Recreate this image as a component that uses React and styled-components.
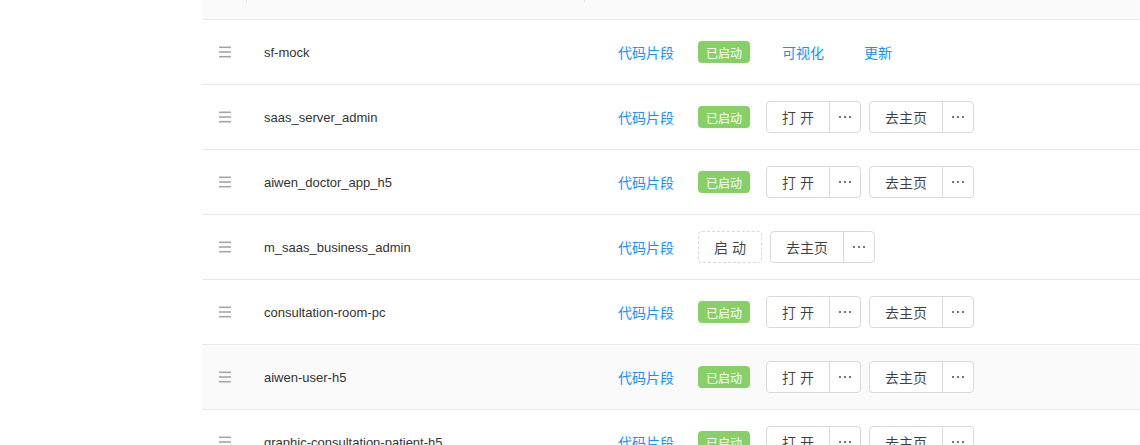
import React from 'react';
import styled, { createGlobalStyle, css } from 'styled-components';

const GlobalStyle = createGlobalStyle`
  html, body {
    margin: 0;
    padding: 0;
    background: #fff;
    overflow: hidden;
  }
  body {
    font-family: "Liberation Sans", "Noto Sans CJK SC", sans-serif;
    color: rgba(0, 0, 0, 0.65);
  }
`;

const Page = styled.div`
  display: flex;
  padding-left: 202px;
`;

const Table = styled.div`
  flex: 1;
  display: flex;
  flex-direction: column;
`;

const Head = styled.div`
  display: grid;
  grid-template-columns: 45px 338px 1fr;
  height: 19px;
  background: #fafafa;
  border-bottom: 1px solid #e8e8e8;
`;

const HeadCell = styled.div`
  position: relative;

  ${(props) =>
    props.divided &&
    css`
      &::after {
        content: '';
        position: absolute;
        right: 0;
        top: 0;
        width: 1px;
        height: 3px;
        background: #e8e8e8;
      }
    `}
`;

const Row = styled.div`
  display: grid;
  grid-template-columns: 45px 338px 1fr;
  height: 64px;
  align-items: center;
  border-bottom: 1px solid #e8e8e8;
  background: ${(props) => (props.hover ? '#fafafa' : '#fff')};
`;

const HandleCell = styled.div`
  display: flex;
  align-items: center;
  padding-left: 17px;
  color: #999;
`;

const NameCell = styled.div`
  padding-left: 17px;
  font-size: 13px;
  color: #333;
`;

const ActionCell = styled.div`
  display: flex;
  align-items: center;
  padding-left: 33px;
`;

const LinkText = styled.span`
  color: #1890ff;
  font-size: 14px;
  margin-left: ${(props) => props.gap || 0}px;
  cursor: pointer;
`;

const Tag = styled.span`
  display: inline-flex;
  align-items: center;
  justify-content: center;
  box-sizing: border-box;
  width: 52px;
  height: 22px;
  margin-left: 24px;
  border-radius: 4px;
  background: #87d068;
  color: #fff;
  font-size: 12px;
`;

const Group = styled.div`
  display: inline-flex;
  margin-left: ${(props) => props.gap}px;
`;

const Button = styled.button`
  box-sizing: border-box;
  width: ${(props) => props.w}px;
  height: 32px;
  padding: 0;
  border: 1px solid #d9d9d9;
  background: #fff;
  color: rgba(0, 0, 0, 0.75);
  font-family: inherit;
  font-size: 14px;
  display: inline-flex;
  align-items: center;
  justify-content: center;
  border-radius: 4px 0 0 4px;

  ${(props) =>
    props.more &&
    css`
      margin-left: -1px;
      border-radius: 0 4px 4px 0;
    `}
`;

const DashedButton = styled(Button)`
  border-style: dashed;
  border-radius: 4px;
  margin-left: 24px;
`;

const DragIcon = () => (
  <svg width="12" height="12" viewBox="0 0 12 12">
    <g fill="#a6a6a6">
      <rect x="0" y="0.5" width="12" height="1.6" />
      <rect x="0" y="5.2" width="12" height="1.6" />
      <rect x="0" y="9.9" width="12" height="1.6" />
    </g>
  </svg>
);

const Dots = () => (
  <svg width="14" height="4" viewBox="0 0 14 4">
    <g fill="#555">
      <circle cx="2" cy="2" r="1.1" />
      <circle cx="7" cy="2" r="1.1" />
      <circle cx="12" cy="2" r="1.1" />
    </g>
  </svg>
);

const SplitButton = ({ label, w, gap }) => (
  <Group gap={gap}>
    <Button w={w}>{label}</Button>
    <Button w={32} more>
      <Dots />
    </Button>
  </Group>
);

const projects = [
  { name: 'sf-mock', state: 'mock' },
  { name: 'saas_server_admin', state: 'running' },
  { name: 'aiwen_doctor_app_h5', state: 'running' },
  { name: 'm_saas_business_admin', state: 'stopped' },
  { name: 'consultation-room-pc', state: 'running' },
  { name: 'aiwen-user-h5', state: 'running', hover: true },
  { name: 'graphic-consultation-patient-h5', state: 'running' },
];

const Actions = ({ state }) => {
  if (state === 'mock') {
    return (
      <>
        <Tag>已启动</Tag>
        <LinkText gap={32}>可视化</LinkText>
        <LinkText gap={40}>更新</LinkText>
      </>
    );
  }
  if (state === 'stopped') {
    return (
      <>
        <DashedButton w={64}>启 动</DashedButton>
        <SplitButton label="去主页" w={74} gap={8} />
      </>
    );
  }
  return (
    <>
      <Tag>已启动</Tag>
      <SplitButton label="打 开" w={64} gap={16} />
      <SplitButton label="去主页" w={74} gap={8} />
    </>
  );
};

const App = () => (
  <Page>
    <GlobalStyle />
    <Table>
      <Head>
        <HeadCell divided />
        <HeadCell divided />
        <HeadCell />
      </Head>
      {projects.map((p) => (
        <Row key={p.name} hover={p.hover}>
          <HandleCell>
            <DragIcon />
          </HandleCell>
          <NameCell>{p.name}</NameCell>
          <ActionCell>
            <LinkText>代码片段</LinkText>
            <Actions state={p.state} />
          </ActionCell>
        </Row>
      ))}
    </Table>
  </Page>
);

export default App;
